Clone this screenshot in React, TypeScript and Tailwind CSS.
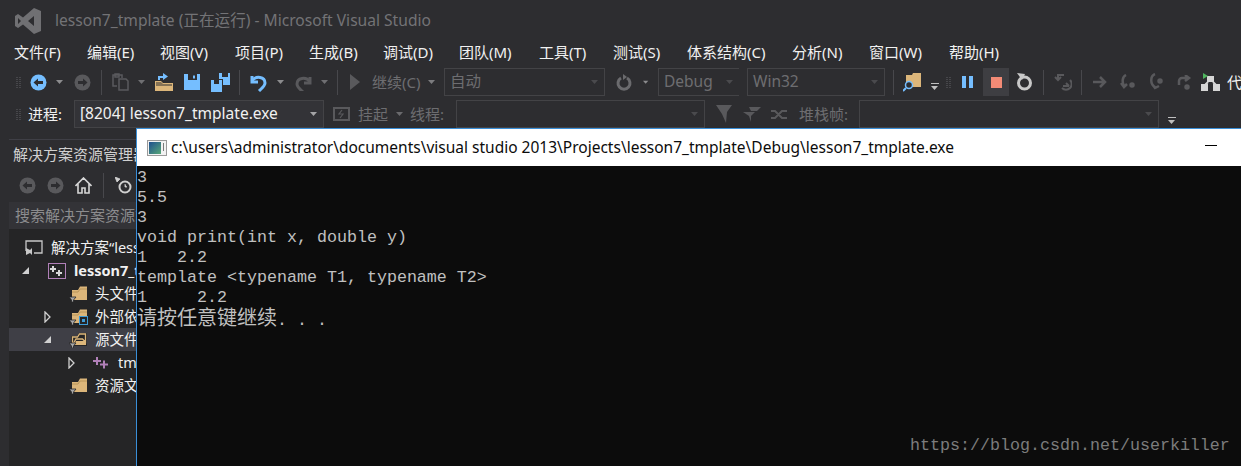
import type { ReactNode } from 'react';

const UI_FONT = { fontFamily: '"Noto Sans", "Noto Sans CJK SC", sans-serif' };

const MENUS = [
  ['文件(F)', 'w-[73px]'],
  ['编辑(E)', 'w-[73px]'],
  ['视图(V)', 'w-[75px]'],
  ['项目(P)', 'w-[74px]'],
  ['生成(B)', 'w-[74px]'],
  ['调试(D)', 'w-[76px]'],
  ['团队(M)', 'w-[80px]'],
  ['工具(T)', 'w-[74px]'],
  ['测试(S)', 'w-[74px]'],
  ['体系结构(C)', 'w-[105px]'],
  ['分析(N)', 'w-[77px]'],
  ['窗口(W)', 'w-[80px]'],
  ['帮助(H)', 'w-[70px]'],
];

function Slot({ w, children }: { w: string; children?: ReactNode }) {
  return <div className={`${w} h-full flex items-center justify-center shrink-0`}>{children}</div>;
}

function Caret({ color = '#8c8c8e' }: { color?: string }) {
  return (
    <svg width="8" height="5" viewBox="0 0 8 5">
      <path d="M0 0h7L3.500 4z" fill={color} />
    </svg>
  );
}

function Sep() {
  return <div className="w-px h-[25px] bg-[#48484c] shrink-0" />;
}

function Grip() {
  return (
    <div className="grid grid-cols-2 gap-px w-[5px] shrink-0">
      {Array.from({ length: 12 }).map((_, i) => (
        <span key={i} className="w-[2px] h-[1px] bg-[#46464a]" />
      ))}
    </div>
  );
}

function Combo({ w, text, dim = true, right = true }: { w: string; text?: string; dim?: boolean; right?: boolean }) {
  return (
    <div
      className={`${w} h-[28px] shrink-0 flex items-center justify-between px-[5px] border ${right ? '' : 'border-r-0'} ${
        dim ? 'border-[#434346] text-[#6d6d70]' : 'border-[#434346] bg-[#333337] text-[#f1f1f1]'
      }`}
    >
      <span className="text-[15.500px] leading-none whitespace-nowrap">{text}</span>
      <Caret color={dim ? '#4a4a4d' : '#a5a5a7'} />
    </div>
  );
}

function Arrow({ fill, dark, flip }: { fill: string; dark: string; flip?: boolean }) {
  return (
    <svg width="17" height="17" viewBox="0 0 17 17" className={flip ? '-scale-x-100' : ''}>
      <circle cx="8.500" cy="8.500" r="8" fill={fill} />
      <path d="M3.500 8.500 8 4.500v2.500h5v3H8v2.500z" fill={dark} />
    </svg>
  );
}

function Folder({ ext, open }: { ext?: boolean; open?: boolean }) {
  return (
    <svg width="19" height="17" viewBox="0 0 19 17">
      {open ? (
        <>
          <path d="M2 15V5h6l2-3h8v13z" fill="#252526" />
          <path d="M3.500 14V6h5l2-3h6v8l-3-3H7z" fill="none" stroke="#dcb67a" strokeWidth="1.300" />
          <path d="M5 14l2-4h10v4z" fill="#dcb67a" />
        </>
      ) : (
        <>
          <path d="M3 5h6l2-3.500h7V15H3z" fill="#dcb67a" />
          <path d="M3 7h6l2-3h7" fill="none" stroke="#b08d52" strokeWidth="0.800" />
        </>
      )}
      <path d="M0 12h7l-2.500 3v2h-2v-2z" fill="#a8a8a8" stroke="#252526" strokeWidth="0.800" />
      {ext && <rect x="10.500" y="8.500" width="8" height="8" fill="#252526" stroke="#3e9bd6" />}
      {ext && <rect x="13" y="11" width="3" height="3" fill="#3e9bd6" />}
    </svg>
  );
}

function TreeArrow({ open }: { open?: boolean }) {
  return open ? (
    <svg width="9" height="9" viewBox="0 0 9 9">
      <path d="M8 1v7H1z" fill="#d0d0d0" />
    </svg>
  ) : (
    <svg width="8" height="12" viewBox="0 0 8 12">
      <path d="M1 1l5 5-5 5z" fill="none" stroke="#d0d0d0" strokeWidth="1.300" />
    </svg>
  );
}

function PlusPlus() {
  return (
    <svg width="16" height="12" viewBox="0 0 16 12" fill="#b180b8">
      <path d="M3 0h2v3h3v2H5v3H3V5H0V3h3z" />
      <path d="M10 3.500h2v3h3v2h-3v3h-2v-3H7v-2h3z" />
    </svg>
  );
}

function TreeRow({
  indent,
  arrow,
  icon,
  label,
  bold,
  selected,
}: {
  indent: string;
  arrow?: ReactNode;
  icon: ReactNode;
  label: string;
  bold?: boolean;
  selected?: boolean;
}) {
  return (
    <div className={`h-[23px] flex items-center ${selected ? 'bg-[#3f3f46]' : ''}`}>
      <div className={`${indent} shrink-0 flex justify-end pr-[3px]`}>{arrow}</div>
      <div className="w-[26px] flex justify-center shrink-0">{icon}</div>
      <span className={`ml-[4px] text-[14.500px] text-[#f1f1f1] whitespace-nowrap ${bold ? 'font-bold' : ''}`}>{label}</span>
    </div>
  );
}

export default function App() {
  return (
    <div className="relative w-[1241px] h-[466px] overflow-hidden bg-[#2d2d30]" style={UI_FONT}>
      {/* title bar */}
      <div className="h-[41px] flex items-center pl-[15px]">
        <svg width="26" height="26" viewBox="0 0 26 26" className="mt-[1px]">
          <path
            d="M19 0l7 3v20l-7 3-11-9.500-5 3.500-3-2V8l3-2 5 3.500zM19 8l-6 5 6 5zM3 10v6l3-3z"
            fill="#707073"
            fillRule="evenodd"
          />
        </svg>
        <span className="ml-[14px] pt-[1px] text-[15.600px] text-[#737376] whitespace-nowrap">
          lesson7_tmplate (正在运行) - Microsoft Visual Studio
        </span>
      </div>

      {/* menu */}
      <div className="h-[22px] flex items-center pl-[14px] text-[15px] text-[#f1f1f1]">
        {MENUS.map(([label, w]) => (
          <span key={label} className={`${w} shrink-0 whitespace-nowrap`}>
            {label}
          </span>
        ))}
      </div>

      {/* standard toolbar */}
      <div className="h-[30px] mt-[4px] flex items-center pl-[16px]">
        <Grip />
        <Slot w="w-[34px]">
          <Arrow fill="#75beff" dark="#2d2d30" />
        </Slot>
        <Slot w="w-[10px]">
          <Caret />
        </Slot>
        <Slot w="w-[34px]">
          <Arrow fill="#59595c" dark="#2d2d30" flip />
        </Slot>
        <div className="w-[2px] shrink-0" />
        <Sep />
        <Slot w="w-[36px]">
          <svg width="17" height="18" viewBox="0 0 17 18" fill="none" stroke="#5a5a5d" strokeWidth="1.500">
            <path d="M5 13H1V2h9v3M7 6h7l2 2v9H7zM3 1h4v3H3z" />
          </svg>
        </Slot>
        <Slot w="w-[8px]">
          <Caret color="#6f6f72" />
        </Slot>
        <Slot w="w-[36px]">
          <svg width="18" height="18" viewBox="0 0 18 18">
            <path d="M0 8h6l2 2h10v8H0z" fill="#dcb67a" />
            <path d="M1 9h5l2 2h9v2H1z" fill="#2d2d30" opacity="0.500" />
            <path d="M3 7V3h5V0l5 3.500L8 7V5H5v2z" fill="#75beff" />
          </svg>
        </Slot>
        <Slot w="w-[20px]">
          <svg width="16" height="16" viewBox="0 0 16 16">
            <path d="M0 0h16v16H0z" fill="#75beff" />
            <path d="M4 0h9v6H4z" fill="#2d2d30" />
            <path d="M9 1.500h2v3H9z" fill="#75beff" />
          </svg>
        </Slot>
        <Slot w="w-[36px]">
          <svg width="19" height="19" viewBox="0 0 19 19">
            <path d="M0 7h11v12H0z" fill="#75beff" />
            <path d="M8 0h11v12H12V6H8z" fill="#75beff" />
            <path d="M3 7h5v4H3zM11 0h6v4h-6z" fill="#2d2d30" />
          </svg>
        </Slot>
        <div className="w-[1px] shrink-0" />
        <Sep />
        <Slot w="w-[37px]">
          <svg width="17" height="19" viewBox="0 0 17 19" fill="none" stroke="#75beff" strokeWidth="3">
            <path d="M2 3v6h6" />
            <path d="M2 8c4-6 13-4 13 2 0 3-3 5-6 8" />
          </svg>
        </Slot>
        <Slot w="w-[8px]">
          <Caret />
        </Slot>
        <Slot w="w-[36px]">
          <svg width="17" height="17" viewBox="0 0 17 17" fill="none" stroke="#59595c" strokeWidth="3" className="-scale-x-100">
            <path d="M2 3v6h6" />
            <path d="M2 8c4-6 13-4 13 2 0 3-3 5-6 8" />
          </svg>
        </Slot>
        <Slot w="w-[8px]">
          <Caret color="#6f6f72" />
        </Slot>
        <div className="w-[8px] shrink-0" />
        <Sep />
        <Slot w="w-[34px]">
          <svg width="12" height="16" viewBox="0 0 12 16">
            <path d="M1 0l10 8-10 8z" fill="#59595c" />
          </svg>
        </Slot>
        <span className="w-[56px] shrink-0 text-[15px] text-[#6d6d70] whitespace-nowrap">继续(C)</span>
        <Slot w="w-[8px]">
          <Caret color="#7c7c7f" />
        </Slot>
        <div className="w-[8px] shrink-0" />
        <Combo w="w-[161px]" text="自动" />
        <Slot w="w-[38px]">
          <svg width="16" height="17" viewBox="0 0 16 17" fill="none" stroke="#6b6b6e" strokeWidth="3">
            <path d="M5 4a6 6 0 1 0 6 0" />
            <path d="M7 0v6l4-3z" fill="#6b6b6e" stroke="none" />
          </svg>
        </Slot>
        <Slot w="w-[6px]">
          <Caret />
        </Slot>
        <div className="w-[9px] shrink-0" />
        <Combo w="w-[81px]" text="Debug" right={false} />
        <div className="w-[8px] shrink-0" />
        <Combo w="w-[138px]" text="Win32" />
        <div className="w-[8px] shrink-0" />
        <Sep />
        <Slot w="w-[36px]">
          <svg width="19" height="21" viewBox="0 0 19 21">
            <path d="M3 3h6l1-2h8v14H6V10H3z" fill="#dcb67a" />
            <circle cx="6" cy="13" r="3.500" fill="#2d2d30" stroke="#75beff" strokeWidth="1.500" />
            <path d="M3 16l-3 3" stroke="#75beff" strokeWidth="2" />
          </svg>
        </Slot>
        <Slot w="w-[10px]">
          <div className="flex flex-col items-center gap-[2px] mt-[9px]">
            <span className="w-[8px] h-px bg-[#c0c0c0]" />
            <Caret color="#c0c0c0" />
          </div>
        </Slot>
        <div className="w-[6px] shrink-0" />
        <Grip />
        <Slot w="w-[32px]">
          <div className="flex gap-[3px]">
            <span className="w-[4px] h-[12px] bg-[#75beff]" />
            <span className="w-[4px] h-[12px] bg-[#75beff]" />
          </div>
        </Slot>
        <div className="w-[26px] h-[28px] bg-[#3e3e42] flex items-center justify-center shrink-0">
          <span className="w-[11px] h-[11px] bg-[#f38b76]" />
        </div>
        <Slot w="w-[30px]">
          <svg width="17" height="18" viewBox="0 0 17 18" fill="none" stroke="#c8c8c8" strokeWidth="3">
            <circle cx="8.500" cy="10" r="6" />
            <path d="M1 0l8 1-3 6z" fill="#c8c8c8" stroke="none" />
          </svg>
        </Slot>
        <div className="w-[4px] shrink-0" />
        <Sep />
        <Slot w="w-[37px]">
          <svg width="18" height="17" viewBox="0 0 18 17" fill="none" stroke="#59595c" strokeWidth="2">
            <path d="M1 3l3 3 3-3M4 6V1h6M9 12h6M12 9l3 3M16 6a5 5 0 0 1-8 8" />
          </svg>
        </Slot>
        <Sep />
        <Slot w="w-[35px]">
          <svg width="14" height="12" viewBox="0 0 14 12" fill="none" stroke="#59595c" strokeWidth="2.500">
            <path d="M0 6h12M7 1l5 5-5 5" />
          </svg>
        </Slot>
        <Slot w="w-[20px]">
          <svg width="15" height="16" viewBox="0 0 15 16" fill="none" stroke="#59595c" strokeWidth="2.500">
            <path d="M6 1C2 3 2 8 4 12M1 9l3 4 3-3" />
            <circle cx="12" cy="11" r="1.500" fill="#59595c" />
          </svg>
        </Slot>
        <Slot w="w-[38px]">
          <svg width="15" height="18" viewBox="0 0 15 18" fill="none" stroke="#59595c" strokeWidth="2.500">
            <path d="M6 1C1 3 1 11 6 14M3 11l3 4 4-2" />
            <circle cx="11" cy="8" r="1.500" fill="#59595c" />
          </svg>
        </Slot>
        <Slot w="w-[18px]">
          <svg width="15" height="15" viewBox="0 0 15 15" fill="none" stroke="#59595c" strokeWidth="2.500">
            <path d="M11 3H5a3 3 0 0 0-3 3v4M8 0l4 3-4 3" />
            <circle cx="10" cy="12" r="1.500" fill="#59595c" />
          </svg>
        </Slot>
        <Slot w="w-[34px]">
          <svg width="19" height="18" viewBox="0 0 19 18">
            <path d="M6 3h7v6H6zM0 11h7v7H0zM12 11h7v7h-7z" fill="#d6d6d6" />
            <path d="M7 9l-3 3M12 9l3 3" stroke="#d6d6d6" strokeWidth="2" />
            <path d="M2 0l5 3-5 3z" fill="#4fb55e" />
          </svg>
        </Slot>
        <span className="shrink-0 text-[15px] text-[#f1f1f1] whitespace-nowrap">代码</span>
      </div>

      {/* debug location toolbar */}
      <div className="h-[34px] flex items-center pl-[16px]">
        <Grip />
        <span className="ml-[7px] w-[46px] shrink-0 text-[15px] text-[#f1f1f1] whitespace-nowrap">进程:</span>
        <Combo w="w-[250px]" text="[8204] lesson7_tmplate.exe" dim={false} />
        <Slot w="w-[34px]">
          <svg width="17" height="14" viewBox="0 0 17 14" fill="none" stroke="#59595c" strokeWidth="2">
            <path d="M1 1h15v12H1z" />
            <path d="M9 3L6 7h4l-3 4" strokeWidth="1.200" />
          </svg>
        </Slot>
        <span className="w-[32px] shrink-0 text-[15px] text-[#6d6d70] whitespace-nowrap">挂起</span>
        <Slot w="w-[20px]">
          <Caret color="#6a6a6d" />
        </Slot>
        <span className="w-[46px] shrink-0 text-[15px] text-[#6d6d70] whitespace-nowrap">线程:</span>
        <Combo w="w-[249px]" />
        <Slot w="w-[38px]">
          <svg width="16" height="18" viewBox="0 0 16 18">
            <path d="M0 0h16l-5 7-1 11-4-9z" fill="#59595c" />
          </svg>
        </Slot>
        <Slot w="w-[18px]">
          <svg width="18" height="15" viewBox="0 0 18 15">
            <path d="M6 0h12l-4 4H8zM0 5h12L8 9v6L6 9z" fill="#59595c" />
          </svg>
        </Slot>
        <Slot w="w-[38px]">
          <svg width="18" height="11" viewBox="0 0 18 11" fill="none" stroke="#59595c" strokeWidth="2">
            <path d="M0 2h4l7 7h5M0 9h4l7-7h5" />
          </svg>
        </Slot>
        <span className="w-[60px] shrink-0 text-[15px] text-[#6d6d70] whitespace-nowrap">堆栈帧:</span>
        <Combo w="w-[300px]" />
        <Slot w="w-[26px]">
          <div className="flex flex-col items-center gap-[2px] mt-[13px]">
            <span className="w-[8px] h-px bg-[#c0c0c0]" />
            <Caret color="#c0c0c0" />
          </div>
        </Slot>
      </div>

      {/* solution explorer, mostly behind the console */}
      <div className="ml-[9px] mt-[8px] w-[127px] overflow-hidden bg-[#252526] border-t border-[#3f3f46]">
        <div className="h-[28px] flex items-center pl-[4px] bg-[#2d2d30] text-[15px] text-[#d0d0d0] whitespace-nowrap">
          解决方案资源管理器
        </div>
        <div className="h-[34px] flex items-center pl-[4px] bg-[#2d2d30]">
          <Slot w="w-[29px]">
            <Arrow fill="#59595c" dark="#2d2d30" />
          </Slot>
          <Slot w="w-[27px]">
            <Arrow fill="#59595c" dark="#2d2d30" flip />
          </Slot>
          <Slot w="w-[28px]">
            <svg width="17" height="17" viewBox="0 0 17 17" fill="none" stroke="#d6d6d6" strokeWidth="1.600">
              <path d="M0.500 9L8.500 1l8 8M3 7v9h4v-5h3v5h4V7" />
            </svg>
          </Slot>
          <div className="ml-[6px] w-px h-[25px] bg-[#48484c] shrink-0" />
          <Slot w="w-[38px]">
            <svg width="17" height="17" viewBox="0 0 17 17">
              <circle cx="10" cy="10" r="5.500" fill="none" stroke="#d0d0d0" strokeWidth="2" />
              <path d="M10 7v3h2M0 0l5 2-3 3z" fill="#d0d0d0" stroke="#d0d0d0" strokeWidth="0.800" />
            </svg>
          </Slot>
        </div>
        <div className="h-[27px] flex items-center pl-[6px] bg-[#333337] text-[15px] text-[#8c8c8e] whitespace-nowrap">
          搜索解决方案资源管理器
        </div>
        <div className="pt-[7px] h-[240px]">
          <TreeRow
            indent="w-[12px]"
            icon={
              <svg width="18" height="16" viewBox="0 0 18 16" fill="none" stroke="#c8c8c8" strokeWidth="1.300">
                <path d="M1 11V1h16v12H9" />
                <path d="M1 8l4 2 2-2v7l-2-2-4 2z" fill="#c8c8c8" stroke="none" />
              </svg>
            }
            label="解决方案“lesson7_tmplate”"
          />
          <TreeRow
            indent="w-[35px]"
            arrow={
              <div className="mr-[11px]">
                <TreeArrow open />
              </div>
            }
            icon={
              <svg width="18" height="16" viewBox="0 0 18 16">
                <rect x="0.500" y="0.500" width="17" height="15" fill="none" stroke="#b180b8" />
                <path d="M4 3h2v2h2v2H6v2H4V7H2V5h2zM10 7h2v2h2v2h-2v2h-2v-2H8V9h2z" fill="#d8d8d8" />
              </svg>
            }
            label="lesson7_tmplate"
            bold
          />
          <TreeRow indent="w-[56px]" icon={<Folder />} label="头文件" />
          <TreeRow
            indent="w-[56px]"
            arrow={
              <div className="mr-[10px]">
                <TreeArrow />
              </div>
            }
            icon={<Folder ext />}
            label="外部依赖项"
          />
          <TreeRow
            indent="w-[56px]"
            arrow={
              <div className="mr-[10px]">
                <TreeArrow open />
              </div>
            }
            icon={<Folder open />}
            label="源文件"
            selected
          />
          <TreeRow
            indent="w-[79px]"
            arrow={
              <div className="mr-[9px]">
                <TreeArrow />
              </div>
            }
            icon={<PlusPlus />}
            label="tmplate.cpp"
          />
          <TreeRow indent="w-[56px]" icon={<Folder />} label="资源文件" />
        </div>
      </div>

      {/* console window floating over the IDE */}
      <div className="absolute left-[136px] top-[128px] w-[1105px] h-[338px] flex flex-col border-l border-t border-[#3a8fd8]">
        <div className="h-[37px] bg-white flex items-center shrink-0">
          <svg width="20" height="16" viewBox="0 0 20 16" className="ml-[10px]">
            <rect x="0.500" y="0.500" width="19" height="15" fill="#f2f2f2" stroke="#9a9a9a" />
            <defs>
              <linearGradient id="pane" x1="0" y1="0" x2="1" y2="1">
                <stop offset="0" stopColor="#1f4f8f" />
                <stop offset="1" stopColor="#58a878" />
              </linearGradient>
            </defs>
            <rect x="2" y="2" width="12" height="12" fill="url(#pane)" />
            <rect x="16" y="3" width="1" height="8" fill="#7a7a7a" />
          </svg>
          <span className="ml-[4px] text-[15.500px] text-[#0c0c0c] whitespace-nowrap" style={{ fontFamily: '"Noto Sans", sans-serif' }}>
            c:\users\administrator\documents\visual studio 2013\Projects\lesson7_tmplate\Debug\lesson7_tmplate.exe
          </span>
          <span className="absolute left-[1068px] top-[16px] w-[12px] h-px bg-black" />
        </div>
        <div
          className="flex-1 bg-[#0c0c0c] pt-[2px] text-[#c0c0c0] text-[16.670px] leading-[20px] whitespace-pre"
          style={{ fontFamily: '"Liberation Mono", "Noto Sans CJK SC", monospace' }}
        >
          <div>3</div>
          <div>5.5</div>
          <div>3</div>
          <div>void print(int x, double y)</div>
          <div>1   2.2</div>
          <div>template &lt;typename T1, typename T2&gt;</div>
          <div>1     2.2</div>
          <div className="h-[20px] leading-[18px]">
            <span className="text-[20px] leading-[18px]" style={{ fontFamily: '"Noto Sans CJK SC", monospace' }}>
              请按任意键继续
            </span>
            . . .
          </div>
        </div>
      </div>

      {/* watermark */}
      <span
        className="absolute left-[910px] top-[436px] text-[16.670px] leading-[20px] text-[#7c7c7c] whitespace-nowrap"
        style={{ fontFamily: '"Liberation Mono", monospace' }}
      >
        https://blog.csdn.net/userkiller
      </span>
    </div>
  );
}
